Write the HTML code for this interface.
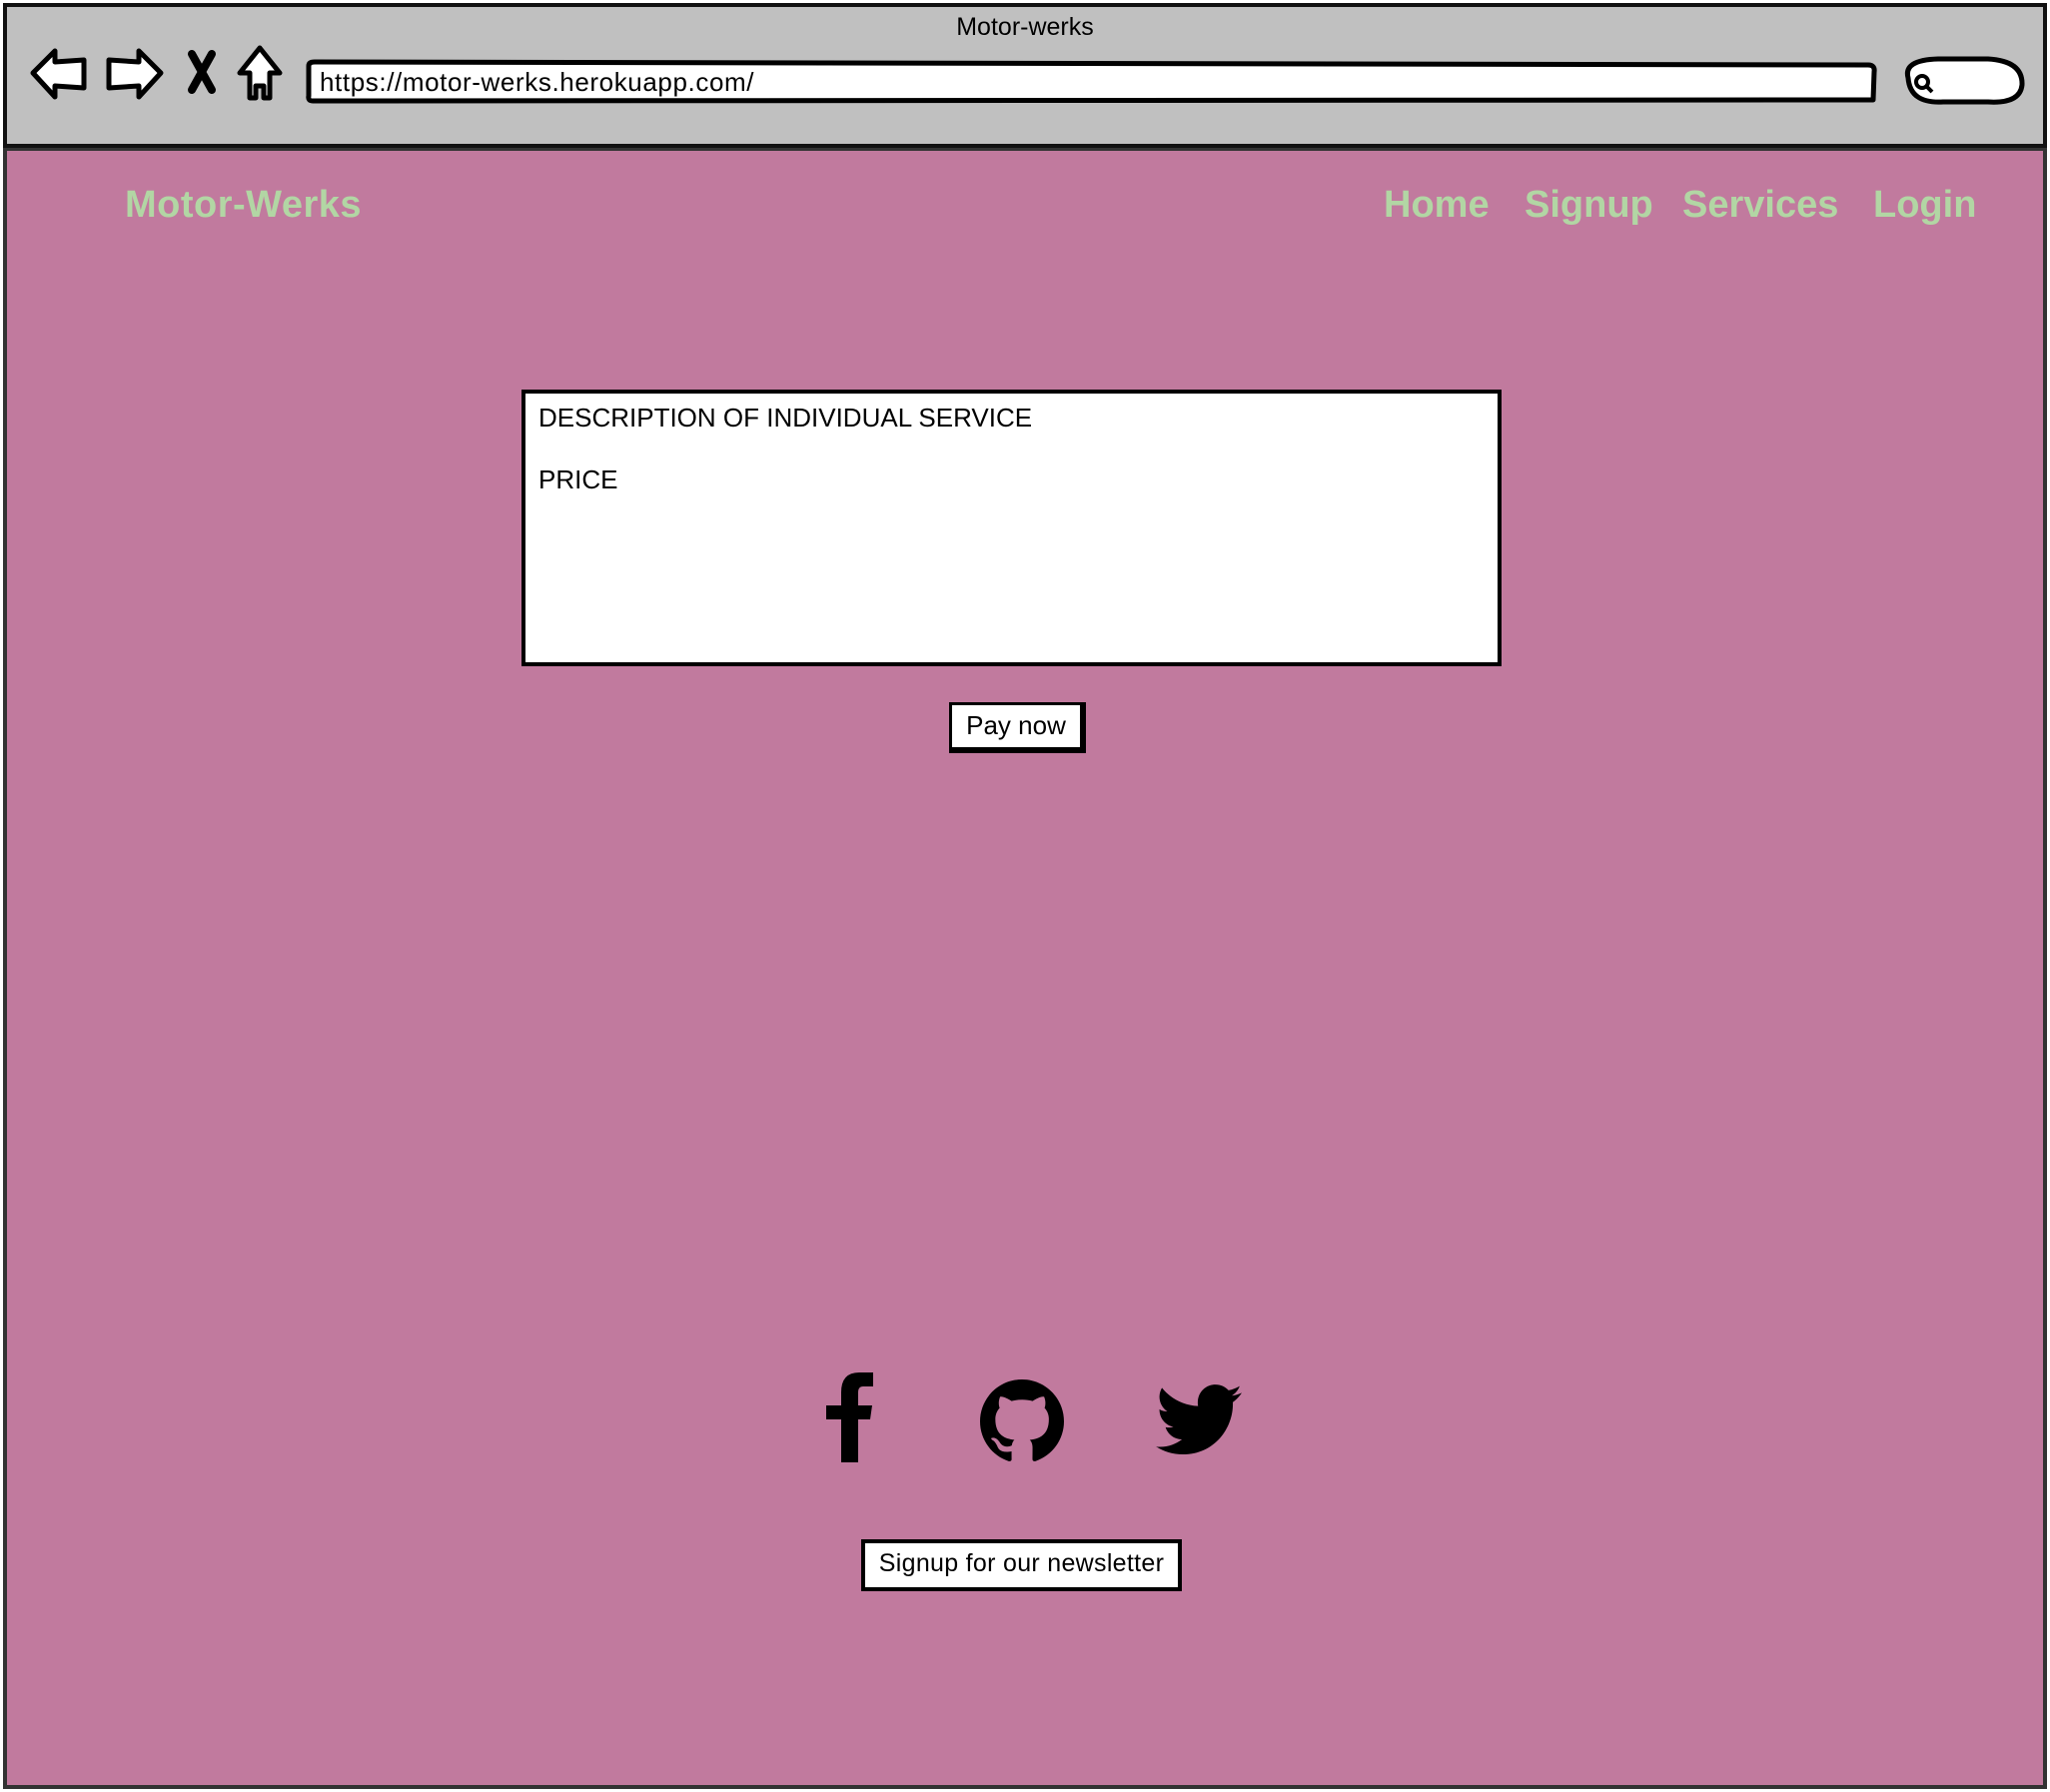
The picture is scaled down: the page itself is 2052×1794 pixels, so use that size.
<!DOCTYPE html>
<html><head><meta charset="utf-8"><style>
*{margin:0;padding:0;box-sizing:border-box}
body{width:2052px;height:1794px;background:#fff;position:relative;overflow:hidden;font-family:"Liberation Sans",sans-serif}
.abs{position:absolute}
#chrome{left:3px;top:3px;width:2046px;height:145px;background:#c0c0c0;border:4px solid #111}
#page{left:3px;top:148px;width:2046px;height:1643px;background:#c17a9e;border:4px solid #333;border-top:3px solid #333}
.nav{color:#b2d6a4;font-weight:bold;font-size:38px;top:184px}
.t{color:#000}
</style></head><body>
<div id="chrome" class="abs"></div>
<div class="abs t" style="left:0;width:2052px;top:13px;text-align:center;font-size:25px">Motor-werks</div>
<svg class="abs" style="left:0;top:0" width="2052" height="148">
<g fill="#fff" stroke="#000" stroke-width="5" stroke-linejoin="round">
<path d="M33 73 L55 51 L55 62 L84 60 L84 88 L55 86 L55 97 Z"/>
<path d="M161 73 L139 51 L139 62 L109 60 L109 88 L139 86 L139 97 Z"/>
<path d="M260 48 L280 73 L270 73 L270 98 L264 98 L264 86 L256 86 L256 98 L250 98 L250 73 L240 73 Z"/>
<path d="M309 66 Q309 62 315 62 L1870 65 Q1877 65 1876 72 L1875 100 L313 101 Q308 101 309 96 Z"/>
<path d="M1910 78 Q1905 60 1940 59 L1990 59 Q2025 61 2024 85 Q2022 104 1990 102 L1945 102 Q1912 104 1910 78 Z"/>
</g>
<path d="M192 54 L212 90 M212 54 L192 90" stroke="#000" stroke-width="8" stroke-linecap="round"/>
<circle cx="1924" cy="82" r="6" fill="none" stroke="#000" stroke-width="4"/>
<path d="M1928 86 L1934 92" stroke="#000" stroke-width="4"/>
</svg>
<div class="abs t" style="left:320px;top:67px;font-size:26px;letter-spacing:0.6px">https://motor-werks.herokuapp.com/</div>
<div id="page" class="abs"></div>
<div class="abs nav" style="left:125px;letter-spacing:0.5px">Motor-Werks</div>
<div class="abs nav" style="left:1385px">Home</div>
<div class="abs nav" style="left:1526px">Signup</div>
<div class="abs nav" style="left:1684px">Services</div>
<div class="abs nav" style="left:1875px">Login</div>
<div class="abs" style="left:522px;top:390px;width:981px;height:277px;background:#fff;border:4px solid #000"></div>
<div class="abs t" style="left:539px;top:403px;font-size:26px">DESCRIPTION OF INDIVIDUAL SERVICE</div>
<div class="abs t" style="left:539px;top:465px;font-size:26px">PRICE</div>
<div class="abs" style="left:950px;top:703px;width:137px;height:51px;background:#fff;border:3px solid #000;border-right-width:6px;border-bottom-width:6px"></div>
<div class="abs t" style="left:950px;width:134px;top:711px;text-align:center;font-size:26px">Pay now</div>
<svg class="abs" style="left:827px;top:1374px" width="48" height="90" viewBox="0 0 48 90"><path d="M15 90 V47 H0 V33 H15 V20 Q15 0 33 0 H47 V14 H37 Q32 14 32 20 V33 H46 L44 47 H32 V90 Z"/></svg>
<svg class="abs" style="left:981px;top:1381px" width="84" height="84" viewBox="0 0 16 16"><path d="M8 0C3.58 0 0 3.58 0 8c0 3.540 2.290 6.530 5.470 7.590.4.07.55-.17.55-.38 0-.19-.01-.82-.01-1.49-2.010.37-2.530-.49-2.690-.94-.09-.23-.48-.94-.82-1.130-.28-.15-.68-.52-.01-.53.63-.01 1.080.58 1.230.82.72 1.210 1.870.87 2.330.66.07-.52.28-.87.51-1.070-1.780-.2-3.640-.89-3.640-3.950 0-.87.31-1.590.82-2.150-.08-.2-.36-1.020.08-2.120 0 0 .67-.21 2.200.82.64-.18 1.320-.27 2-.27.68 0 1.360.09 2 .27 1.530-1.040 2.200-.82 2.200-.82.44 1.100.16 1.920.08 2.120.51.56.82 1.270.82 2.150 0 3.070-1.870 3.750-3.650 3.950.29.25.54.73.54 1.480 0 1.070-.01 1.930-.01 2.200 0 .21.15.46.55.38A8.013 8.013 0 0016 8c0-4.420-3.580-8-8-8z"/></svg>
<svg class="abs" style="left:1157px;top:1386px" width="86" height="72" viewBox="0 0 24 20"><path d="M24 2.3c-.9.4-1.8.7-2.8.8 1-.6 1.8-1.6 2.2-2.7-1 .6-2 1-3.1 1.2C19.4.6 18.1 0 16.6 0c-2.7 0-4.9 2.2-4.9 4.9 0 .4 0 .8.1 1.1C7.7 5.8 4.1 3.9 1.7.9c-.4.7-.7 1.6-.7 2.5 0 1.7.9 3.2 2.2 4.1-.8 0-1.6-.2-2.2-.6v.1c0 2.4 1.7 4.4 3.9 4.8-.4.1-.8.2-1.3.2-.3 0-.6 0-.9-.1.6 2 2.4 3.4 4.6 3.4-1.7 1.3-3.8 2.1-6.1 2.1-.4 0-.8 0-1.2-.1 2.2 1.4 4.8 2.2 7.5 2.2 9.1 0 14-7.5 14-14v-.6c1-.7 1.8-1.6 2.5-2.6z"/></svg>
<div class="abs" style="left:862px;top:1541px;width:321px;height:52px;background:#fff;border:4px solid #000"></div>
<div class="abs t" style="left:862px;width:321px;top:1551px;text-align:center;font-size:25px;letter-spacing:0.3px">Signup for our newsletter</div>
</body></html>
